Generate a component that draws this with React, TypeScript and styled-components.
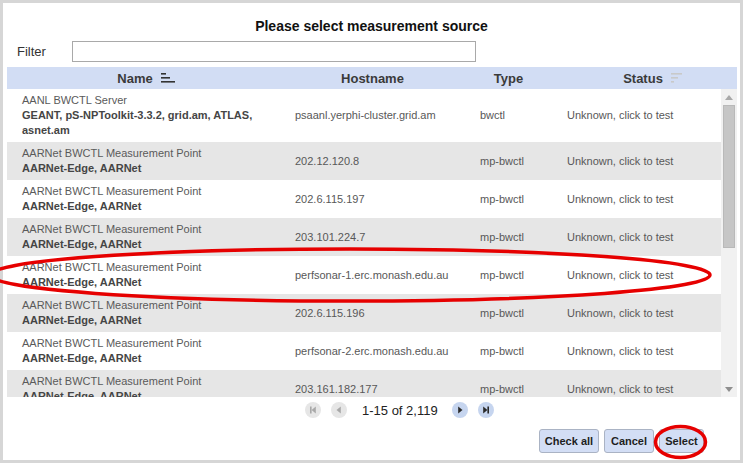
import React from 'react';
import styled, { createGlobalStyle } from 'styled-components';

const GlobalStyle = createGlobalStyle`
  html, body { margin: 0; padding: 0; }
  body {
    background: #d6d6d6;
    font-family: "Liberation Sans", Arial, sans-serif;
    width: 743px;
    height: 463px;
    overflow: hidden;
  }
  * { box-sizing: border-box; }
`;

const Page = styled.div`
  position: relative;
  width: 743px;
  height: 463px;
  padding: 3px;
`;

const Dialog = styled.div`
  width: 737px;
  height: 457px;
  background: #fff;
  display: flex;
  flex-direction: column;
`;

const Title = styled.h1`
  margin: 0;
  padding-top: 15px;
  height: 32px;
  font-size: 14px;
  line-height: 17px;
  font-weight: bold;
  color: #111;
  text-align: center;
`;

const FilterRow = styled.div`
  display: flex;
  align-items: center;
  margin-top: 6px;
  padding-left: 14px;
  height: 21px;
`;

const FilterLabel = styled.label`
  width: 55px;
  font-size: 13px;
  color: #333;
`;

const FilterInput = styled.input`
  width: 404px;
  height: 21px;
  border: 1px solid #a9a9a9;
  padding: 0 4px;
  font-family: inherit;
  font-size: 12px;
  outline: none;
`;

const Table = styled.div`
  margin: 5px 3px 0 4px;
  width: 730px;
  display: flex;
  flex-direction: column;
`;

const COLS = '273px 185px 87px 1fr';

const HeaderRow = styled.div`
  display: grid;
  grid-template-columns: ${COLS};
  height: 22px;
  background: #d2ddf4;
`;

const HeaderCell = styled.div<{ $shift?: number }>`
  display: flex;
  align-items: center;
  justify-content: center;
  gap: 8px;
  padding-left: ${(p) => p.$shift ?? 0}px;
  font-size: 13px;
  font-weight: bold;
  color: #3a3a3a;
`;

const BodyWrap = styled.div`
  display: flex;
  height: 308px;
`;

const Rows = styled.div`
  flex: 1;
  overflow: hidden;
`;

const Row = styled.div<{ $alt: boolean }>`
  display: grid;
  grid-template-columns: ${COLS};
  align-items: center;
  padding: 4px 0;
  background: ${(p) => (p.$alt ? '#e6e6e6' : '#ffffff')};
  font-size: 11px;
  line-height: 15px;
  color: #585858;
`;

const Cell = styled.div`
  padding-left: 15px;
  padding-right: 8px;
  white-space: nowrap;
`;

const NameCell = styled.div`
  padding-left: 15px;
  padding-right: 8px;
`;

const NameTitle = styled.div`
  color: #5a5a5a;
`;

const NameOrg = styled.div`
  font-weight: bold;
  color: #454545;
`;

const ScrollTrack = styled.div`
  width: 16px;
  background: #f1f1f1;
  display: flex;
  flex-direction: column;
  align-items: center;
`;

const ScrollArrow = styled.div`
  height: 16px;
  display: flex;
  align-items: center;
  justify-content: center;
`;

const ScrollThumb = styled.div`
  width: 12px;
  height: 143px;
  background: #c6c6c6;
  border: 1px solid #b9b9b9;
`;

const ScrollSpacer = styled.div`
  flex: 1;
`;

const Pager = styled.div`
  display: flex;
  align-items: center;
  height: 26px;
  padding-left: 302px;
`;

const PagerText = styled.span`
  font-size: 13px;
  color: #222;
  margin: 0 14px 0 15px;
`;

const PagerBtn = styled.span<{ $gap?: number }>`
  display: inline-flex;
  margin-left: ${(p) => p.$gap ?? 0}px;
`;

const Buttons = styled.div`
  display: flex;
  justify-content: flex-end;
  gap: 5px;
  margin-top: 6px;
  padding-right: 36px;
`;

const Button = styled.button<{ $w: number }>`
  width: ${(p) => p.$w}px;
  height: 24px;
  padding: 0;
  background: #d3def5;
  border: 1px solid #aab3c4;
  border-radius: 3px;
  font-family: inherit;
  font-size: 11px;
  font-weight: bold;
  color: #1e1e1e;
`;

const Annotation = styled.svg`
  position: absolute;
  left: 0;
  top: 0;
  pointer-events: none;
`;

const SortAsc = () => (
  <svg width="14" height="10" viewBox="0 0 14 10">
    <rect x="0" y="0" width="5" height="1.6" fill="#333" />
    <rect x="0" y="4" width="9" height="1.6" fill="#333" />
    <rect x="0" y="8" width="14" height="1.6" fill="#333" />
  </svg>
);

const SortNone = () => (
  <svg width="12" height="10" viewBox="0 0 12 10">
    <rect x="0" y="0" width="11" height="1.6" fill="#c9c9c9" />
    <rect x="0" y="4" width="7" height="1.6" fill="#c9c9c9" />
    <rect x="0" y="8" width="3" height="1.6" fill="#c9c9c9" />
  </svg>
);

type PageIconKind = 'first' | 'prev' | 'next' | 'last';

const PageIcon = ({ kind, enabled }: { kind: PageIconKind; enabled: boolean }) => {
  const bg = enabled ? '#c6d5ef' : '#e6e6e6';
  const fg = enabled ? '#2a2a2a' : '#a8a8a8';
  return (
    <svg width="16" height="16" viewBox="0 0 16 16">
      <circle cx="8" cy="8" r="8" fill={bg} />
      {kind === 'first' && (
        <>
          <rect x="5" y="4.5" width="1.6" height="7" fill={fg} />
          <path d="M6.6 8 L10.8 4.5 L10.8 11.5 Z" fill={fg} />
        </>
      )}
      {kind === 'prev' && <path d="M5.5 8 L9.8 4.5 L9.8 11.5 Z" fill={fg} />}
      {kind === 'next' && <path d="M10.5 8 L6.2 4.5 L6.2 11.5 Z" fill={fg} />}
      {kind === 'last' && (
        <>
          <path d="M9.4 8 L5.2 4.5 L5.2 11.5 Z" fill={fg} />
          <rect x="9.4" y="4.5" width="1.6" height="7" fill={fg} />
        </>
      )}
    </svg>
  );
};

const ArrowUp = () => (
  <svg width="8" height="5" viewBox="0 0 8 5">
    <path d="M0 5 L4 0 L8 5 Z" fill="#a9a9a9" />
  </svg>
);

const ArrowDown = () => (
  <svg width="8" height="5" viewBox="0 0 8 5">
    <path d="M0 0 L8 0 L4 5 Z" fill="#8f8f8f" />
  </svg>
);

type Source = { title: string; org: string; host: string; type: string };

const aar = 'AARNet BWCTL Measurement Point';
const aarOrg = 'AARNet-Edge, AARNet';

const sources: Source[] = [
  { title: 'AANL BWCTL Server', org: 'GEANT, pS-NPToolkit-3.3.2, grid.am, ATLAS, asnet.am', host: 'psaanl.yerphi-cluster.grid.am', type: 'bwctl' },
  { title: aar, org: aarOrg, host: '202.12.120.8', type: 'mp-bwctl' },
  { title: aar, org: aarOrg, host: '202.6.115.197', type: 'mp-bwctl' },
  { title: aar, org: aarOrg, host: '203.101.224.7', type: 'mp-bwctl' },
  { title: aar, org: aarOrg, host: 'perfsonar-1.erc.monash.edu.au', type: 'mp-bwctl' },
  { title: aar, org: aarOrg, host: '202.6.115.196', type: 'mp-bwctl' },
  { title: aar, org: aarOrg, host: 'perfsonar-2.erc.monash.edu.au', type: 'mp-bwctl' },
  { title: aar, org: aarOrg, host: '203.161.182.177', type: 'mp-bwctl' },
  { title: aar, org: aarOrg, host: '202.158.194.2', type: 'mp-bwctl' },
  { title: aar, org: aarOrg, host: '202.158.210.2', type: 'mp-bwctl' },
];

export default function App() {
  return (
    <>
      <GlobalStyle />
      <Page>
        <Dialog>
          <Title>Please select measurement source</Title>
          <FilterRow>
            <FilterLabel>Filter</FilterLabel>
            <FilterInput type="text" />
          </FilterRow>
          <Table>
            <HeaderRow>
              <HeaderCell $shift={5}>
                Name <SortAsc />
              </HeaderCell>
              <HeaderCell>Hostname</HeaderCell>
              <HeaderCell>Type</HeaderCell>
              <HeaderCell $shift={17}>
                Status <SortNone />
              </HeaderCell>
            </HeaderRow>
            <BodyWrap>
              <Rows>
                {sources.map((s, i) => (
                  <Row key={i} $alt={i % 2 === 1}>
                    <NameCell>
                      <NameTitle>{s.title}</NameTitle>
                      <NameOrg>{s.org}</NameOrg>
                    </NameCell>
                    <Cell>{s.host}</Cell>
                    <Cell>{s.type}</Cell>
                    <Cell>Unknown, click to test</Cell>
                  </Row>
                ))}
              </Rows>
              <ScrollTrack>
                <ScrollArrow>
                  <ArrowUp />
                </ScrollArrow>
                <ScrollThumb />
                <ScrollSpacer />
                <ScrollArrow>
                  <ArrowDown />
                </ScrollArrow>
              </ScrollTrack>
            </BodyWrap>
          </Table>
          <Pager>
            <PagerBtn>
              <PageIcon kind="first" enabled={false} />
            </PagerBtn>
            <PagerBtn $gap={10}>
              <PageIcon kind="prev" enabled={false} />
            </PagerBtn>
            <PagerText>1-15 of 2,119</PagerText>
            <PagerBtn>
              <PageIcon kind="next" enabled />
            </PagerBtn>
            <PagerBtn $gap={10}>
              <PageIcon kind="last" enabled />
            </PagerBtn>
          </Pager>
          <Buttons>
            <Button $w={60}>Check all</Button>
            <Button $w={50}>Cancel</Button>
            <Button $w={45}>Select</Button>
          </Buttons>
        </Dialog>
        <Annotation width="743" height="463" viewBox="0 0 743 463">
          <ellipse cx="350" cy="275" rx="360" ry="26" fill="none" stroke="#e60000" strokeWidth="3.5" />
          <ellipse cx="680.5" cy="442" rx="25" ry="15.5" fill="none" stroke="#e60000" strokeWidth="3.5" />
        </Annotation>
      </Page>
    </>
  );
}
